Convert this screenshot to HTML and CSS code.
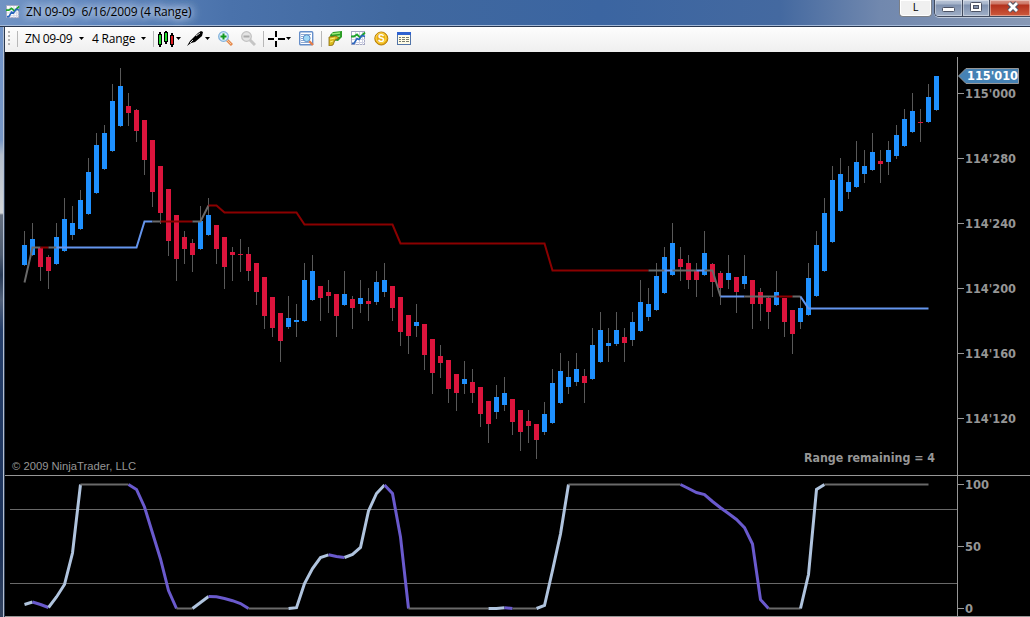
FILE: index.html
```html
<!DOCTYPE html>
<html lang="en">
<head>
    <meta charset="UTF-8">
    <meta name="viewport" content="width=device-width, initial-scale=1.0">
    <title>ZN 09-09 6/16/2009 (4 Range)</title>
    <link rel="stylesheet" href="styles.css">
</head>
<body>
    <svg class="defs" width="0" height="0">
        <symbol id="chartIcon" viewBox="0 0 15 15">
            <rect x=".5" y=".5" width="13" height="13" fill="#fff" stroke="#a6a9c4"/>
            <path d="M4.5 1v13M8.5 1v13M11.5 1v13M1 4.5h13M1 8.5h13M1 11.5h13" stroke="#cfd1e3"/>
            <path d="M0 5.5h3l3-2 3 3 5-5" fill="none" stroke="#20a52c" stroke-width="1.8"/>
            <path d="M1 12.5h2l3-5 2 1 3-4 3 1" fill="none" stroke="#2865bd" stroke-width="1.6"/>
        </symbol>
        <symbol id="arrow" viewBox="0 0 5 3">
            <path d="M0 0h5L2.5 3z" fill="#000"/>
        </symbol>
    </svg>

    <div class="window">
        <div class="titlebar">
            <svg class="title-icon" width="14" height="14"><use href="#chartIcon"/></svg>
            <span class="title">ZN 09-09&nbsp; 6/16/2009 (4 Range)</span>
            <div class="link-button">L</div>
            <div class="window-buttons">
                <div class="win-button minimize"><svg width="13" height="6"><rect x=".5" y=".5" width="12" height="4" rx="1" fill="#fff" stroke="#4c5264"/></svg></div>
                <div class="win-button maximize"><svg width="12" height="11"><rect x=".5" y=".5" width="11" height="9" rx="1" fill="#fff" stroke="#4c5264"/><rect x="3.5" y="3.5" width="5" height="3" fill="#8593ac" stroke="#4c5264"/></svg></div>
                <div class="win-button close"><svg width="14" height="12" viewBox="0 0 14 12"><path d="M3 2l8 8M11 2l-8 8" stroke="#555766" stroke-width="5"/><path d="M3 2l8 8M11 2l-8 8" stroke="#fff" stroke-width="2.8"/></svg></div>
            </div>
        </div>

        <div class="toolbar">
            <div class="grip"></div>
            <div class="separator"></div>
            <span class="label instrument">ZN 09-09</span>
            <svg class="arrow after-instrument"><use href="#arrow"/></svg>
            <span class="label period">4 Range</span>
            <svg class="arrow after-period"><use href="#arrow"/></svg>
            <div class="separator"></div>
            <svg class="icon candles" width="18" height="16" viewBox="0 0 18 16">
                <path d="M3 1v15M9 0v13M15 2v14" stroke="#000" stroke-width="2"/>
                <rect x="1.5" y="3.5" width="3" height="10" fill="#1fdc2c" stroke="#000"/>
                <rect x="7.5" y="1.5" width="3" height="9" fill="#1fdc2c" stroke="#000"/>
                <rect x="13.5" y="4.5" width="3" height="9" fill="#e01c20" stroke="#000"/>
            </svg>
            <svg class="arrow"><use href="#arrow"/></svg>
            <svg class="icon pen" width="17" height="16" viewBox="0 0 17 16">
                <path d="M0 15l3-5 8-8 3-2 2 1-1 4-7 6-4 1z" fill="#000"/>
                <path d="M3 12l3-3M9 5l4-3" stroke="#d8d8d8"/>
            </svg>
            <svg class="arrow"><use href="#arrow"/></svg>
            <svg class="icon" width="15" height="15" viewBox="0 0 15 15">
                <path d="M9 9l5 5" stroke="#e58a4e" stroke-width="3"/>
                <path d="M9 9l4 4" stroke="#f7c99c"/>
                <circle cx="5.5" cy="5.5" r="4.8" fill="#dceffb" stroke="#83b3dc" stroke-width="1.3"/>
                <path d="M5.5 2.5v6M2.5 5.5h6" stroke="#12981b" stroke-width="2"/>
            </svg>
            <svg class="icon" width="15" height="15" viewBox="0 0 15 15">
                <path d="M9 9l5 5" stroke="#c5c5c5" stroke-width="3"/>
                <circle cx="5.5" cy="5.5" r="4.8" fill="#e4e4e4" stroke="#c2c2c2" stroke-width="1.3"/>
                <path d="M2.5 5.5h6" stroke="#aaa" stroke-width="2"/>
            </svg>
            <div class="separator"></div>
            <svg class="icon crosshair" width="17" height="16" viewBox="0 0 17 16" shape-rendering="crispEdges">
                <path d="M8 0v6M8 10v6M0 8h6M10 8h7" stroke="#000" stroke-width="2"/>
            </svg>
            <svg class="arrow"><use href="#arrow"/></svg>
            <svg class="icon" width="15" height="15" viewBox="0 0 15 15">
                <rect x=".7" y=".7" width="13" height="13" rx="1" fill="#fff" stroke="#668fca" stroke-width="1.4"/>
                <path d="M2 3.5h10M2 5.5h3M2 7.5h2M2 9.5h3M2 11.5h8" stroke="#8fa9d2"/>
                <path d="M10 10l4 4" stroke="#e27c4a" stroke-width="2.4"/>
                <circle cx="7.7" cy="7.2" r="3.4" fill="#9fd8f6" stroke="#5b8cc4"/>
            </svg>
            <div class="separator"></div>
            <svg class="icon money" width="15" height="15" viewBox="0 0 15 15">
                <path d="M2 4l3-3 9-1v6l-4 4-7-1z" fill="#2b9c25"/>
                <path d="M4 3l8-1M6 6l6-1" stroke="#9bea75" stroke-width="1.4"/>
                <path d="M1 6l7-1 3 2-4 2-2 5-4 1z" fill="#d9b91e" stroke="#866710" stroke-width=".8"/>
                <path d="M2 8l5-1M2 11l3-1" stroke="#fff17b"/>
            </svg>
            <svg class="icon" width="15" height="15"><use href="#chartIcon"/></svg>
            <svg class="icon" width="15" height="15" viewBox="0 0 15 15">
                <circle cx="7.3" cy="7.5" r="6.5" fill="#e9ae12" stroke="#b57c08"/>
                <circle cx="7" cy="7" r="5" fill="none" stroke="#ffda52"/>
                <text class="dollar" x="7.3" y="11">S</text>
            </svg>
            <svg class="icon" width="15" height="15" viewBox="0 0 15 15">
                <rect x=".5" y="1.5" width="13" height="12" fill="#fffbe6" stroke="#5274a8"/>
                <path d="M0 2.5h14" stroke="#2f62d0" stroke-width="3"/>
                <path d="M2 6.5h2M5 6.5h3M9 6.5h3M2 8.5h2M5 8.5h3M9 8.5h3M2 10.5h2M5 10.5h3M9 10.5h3" stroke="#777c70"/>
            </svg>
        </div>

        <svg class="chart" id="chart" width="1025" height="565" viewBox="5 52 1025 565">
            <g id="bars" shape-rendering="crispEdges"></g>
            <g id="average"></g>

            <g class="grid" shape-rendering="crispEdges">
                <path d="M10 509.5H957M10 583.5H957"/>
            </g>
            <g id="oscillator"></g>
            <g class="axis" shape-rendering="crispEdges">
                <path d="M957.5 57V616M5 475.5H1030M5 616.5H1030"/>
            </g>
            <g id="ticks"></g>

            <path class="price-tag" d="M958.5 76L966 68.5H1018.5V83.5H966z"/>
            <text class="price" x="967" y="80" textLength="51" lengthAdjust="spacingAndGlyphs">115'010</text>
            <text class="remaining" x="804" y="462" textLength="131" lengthAdjust="spacingAndGlyphs">Range remaining = 4</text>
            <text class="copyright" x="12" y="470" textLength="124" lengthAdjust="spacingAndGlyphs">© 2009 NinjaTrader, LLC</text>
        </svg>
    </div>

    <script>
        const SVG_NS = 'http://www.w3.org/2000/svg';
        const FIRST_X = 24;
        const BAR_STEP = 8;

        // Each bar: direction, high, body top, body bottom, low
        const bars = [
            ['u',231,245,265,266], ['u',223,239,255,256], ['d',248,248,267,281], ['d',255,257,271,289],
            ['u',223,237,264,265], ['u',198,219,251,252], ['u',206,223,235,240], ['u',190,200,229,230],
            ['u',158,172,214,215], ['u',133,145,193,194], ['u',125,133,169,170], ['u',84,101,151,152],
            ['u',68,86,126,127], ['d',93,106,113,126], ['d',109,110,131,142], ['d',120,120,160,175],
            ['d',140,140,192,207], ['d',166,166,213,224], ['d',189,189,241,256], ['d',215,215,259,281],
            ['d',231,237,249,264], ['d',239,243,255,272], ['u',206,221,249,250], ['u',198,215,235,236],
            ['d',225,225,249,264], ['d',237,237,267,289], ['d',247,252,255,281], ['d',239,254,255,272],
            ['d',247,254,271,281], ['d',263,263,292,305], ['d',277,277,316,329], ['d',297,297,328,337],
            ['d',313,313,341,362], ['u',296,318,327,329], ['u',304,320,322,337], ['u',263,280,321,322],
            ['u',255,271,300,301], ['d',286,286,298,321], ['d',280,292,296,313], ['d',294,294,316,337],
            ['u',271,294,305,306], ['d',296,299,308,329], ['u',280,298,304,313], ['d',288,301,304,321],
            ['u',271,282,302,305], ['u',263,280,292,297], ['d',286,286,308,321], ['d',297,297,332,346],
            ['d',315,315,336,354], ['u',304,322,326,337], ['d',324,324,355,370], ['d',339,339,373,394],
            ['d',345,356,363,378], ['d',360,360,389,403], ['d',374,374,393,411], ['u',361,379,384,394],
            ['d',369,382,393,403], ['d',387,387,414,427], ['d',401,401,424,443], ['u',385,397,412,419],
            ['u',377,393,405,411], ['d',399,399,422,435], ['d',410,410,432,451], ['d',410,421,426,443],
            ['d',424,424,440,459], ['u',402,414,432,435], ['u',369,383,423,424], ['u',353,371,403,404],
            ['u',361,377,387,394], ['u',353,369,382,386], ['d',369,376,383,403], ['u',328,345,379,380],
            ['u',312,330,362,363], ['u',328,343,346,362], ['u',312,330,344,346], ['d',328,337,343,362],
            ['u',312,322,340,346], ['u',280,302,331,332], ['u',288,304,317,321], ['u',263,276,310,311],
            ['u',247,257,293,294], ['u',223,243,275,276], ['d',247,259,267,281], ['d',255,263,280,289],
            ['d',263,271,280,297], ['u',231,253,275,276], ['d',263,264,282,297], ['d',271,273,288,305],
            ['u',255,273,280,289], ['d',277,277,292,313], ['u',255,276,284,289], ['d',280,280,304,329],
            ['d',288,292,304,321], ['d',297,298,312,329], ['u',271,292,305,306], ['d',298,298,322,337],
            ['d',310,310,334,354], ['u',296,308,322,329], ['u',263,278,315,316], ['u',231,245,296,297],
            ['u',198,213,271,272], ['u',166,180,242,243], ['u',158,174,211,212], ['u',166,182,192,199],
            ['u',141,162,187,188], ['u',150,166,174,183], ['u',133,152,170,171], ['d',150,161,164,183],
            ['u',141,150,162,175], ['u',125,135,156,159], ['u',109,119,146,147], ['u',93,111,132,133],
            ['d',109,122,123,142], ['u',84,97,122,123], ['u',76,76,110,111]
        ];

        // Line runs: class name, then [bar index, y] points
        const average = [
            ['flat', [0,282.5], [1,247.5], [2,247.5]],
            ['down', [2,247.5], [3,247.5]],
            ['flat', [3,247.5], [4,247.5]],
            ['up', [4,247.5], [14,247.5], [15,221.5], [16,221.5]],
            ['flat', [16,221.5], [17,221.5]],
            ['down', [17,221.5], [21,221.5]],
            ['flat', [21,221.5], [22,221.5], [23,205.5]],
            ['down', [23,205.5], [24,205.5], [25,212.5], [34,212.5], [35,224.5], [46,224.5], [47,243.5], [65,243.5], [66,270.5], [78,270.5]],
            ['flat', [78,270.5], [80,270.5]],
            ['up', [80,270.5], [81,270.5]],
            ['flat', [81,270.5], [84,270.5]],
            ['up', [84,270.5], [85,270.5]],
            ['flat', [85,270.5], [86,270.5], [87,296.5]],
            ['up', [87,296.5], [90,296.5]],
            ['flat', [90,296.5], [94,296.5]],
            ['down', [94,296.5], [96,296.5]],
            ['flat', [96,296.5], [97,296.5]],
            ['up', [97,296.5], [98,308.5], [113,308.5]]
        ];

        const oscillator = [
            ['rising', [0,604.5], [1,602]],
            ['falling', [1,602], [2,604.5], [3,607.5]],
            ['rising', [3,607.5], [4,597], [5,584.5], [6,553], [7,484.5]],
            ['flat', [7,484.5], [13,484.5]],
            ['falling', [13,484.5], [14,489.5], [15,507], [16,533], [17,559], [18,590.5], [19,608.5]],
            ['flat', [19,608.5], [21,608.5]],
            ['rising', [21,608.5], [22,602.5], [23,596.5]],
            ['falling', [23,596.5], [24,596.8], [25,598.5], [26,600.7], [27,603.5], [28,608.5]],
            ['flat', [28,608.5], [33,608.5]],
            ['rising', [33,608.5], [34,607.7], [35,583.5], [36,568.5], [37,557.5], [38,554.8]],
            ['falling', [38,554.8], [39,556.5], [40,557.5]],
            ['rising', [40,557.5], [41,554.5], [42,547.5], [43,511], [44,493.5], [45,485]],
            ['falling', [45,485], [46,493.5], [47,537], [48,608.5]],
            ['flat', [48,608.5], [58,608.5]],
            ['rising', [58,608.5], [59,608.5], [60,607.7]],
            ['falling', [60,607.7], [61,608.5]],
            ['flat', [61,608.5], [64,608.5]],
            ['rising', [64,608.5], [65,605.5], [66,570.5], [67,534], [68,484.5]],
            ['flat', [68,484.5], [82,484.5]],
            ['falling', [82,484.5], [83,488.5], [84,492.5], [85,494.5], [86,501.5], [87,507.7], [88,513.5], [89,519.5], [90,527.7], [91,544], [92,599.7], [93,608.5]],
            ['flat', [93,608.5], [97,608.5]],
            ['rising', [97,608.5], [98,574.5], [99,489.5], [100,484.5]],
            ['flat', [100,484.5], [113,484.5]]
        ];

        const ticks = [
            ["115'000", 93, 51], ["114'280", 158, 51], ["114'240", 223, 51],
            ["114'200", 288, 51], ["114'160", 353, 51], ["114'120", 418, 51],
            ['100', 484, 24], ['50', 546, 16], ['0', 608, 8]
        ];

        function add(parent, tag, attrs) {
            const el = document.createElementNS(SVG_NS, tag);
            for (const key in attrs) {
                el.setAttribute(key, attrs[key]);
            }
            parent.appendChild(el);
            return el;
        }

        function drawBars() {
            const group = document.getElementById('bars');
            bars.forEach(([dir, high, top, bottom, low], i) => {
                const x = FIRST_X + i * BAR_STEP;
                add(group, 'rect', { class: 'wick', x: x, y: high, width: 1, height: low - high });
                add(group, 'rect', { class: 'body-' + dir, x: x - 2, y: top, width: 5, height: bottom - top });
            });
        }

        function drawLine(id, runs) {
            const group = document.getElementById(id);
            runs.forEach(([name, ...points]) => {
                const coords = points.map(([i, y]) => (FIRST_X + 0.5 + i * BAR_STEP) + ',' + y);
                add(group, 'polyline', { class: 'line ' + name, points: coords.join(' ') });
            });
        }

        function drawTicks() {
            const group = document.getElementById('ticks');
            ticks.forEach(([text, y, width]) => {
                add(group, 'rect', { class: 'tick', x: 958, y: y, width: 6, height: 1 });
                const label = add(group, 'text', { class: 'tick-label', x: 965, y: y + 5, textLength: width, lengthAdjust: 'spacingAndGlyphs' });
                label.textContent = text;
            });
        }

        drawBars();
        drawLine('average', average);
        drawLine('oscillator', oscillator);
        drawTicks();
    </script>
</body>
</html>
```
FILE: styles.css
```css
* {
    margin: 0;
    padding: 0;
    box-sizing: border-box;
}

body {
    font-family: "Open Sans", "Noto Sans", sans-serif;
    background: #000;
    overflow: hidden;
}

.defs {
    display: block;
}

/* The 5px on the left is the glass frame */
.window {
    width: 1030px;
    height: 617px;
    display: flex;
    flex-direction: column;
    padding-left: 5px;
    background:
        linear-gradient(90deg, transparent 3px, #b4c0d2 3px, #b4c0d2 4px, #2c3a50 4px, #2c3a50 5px, transparent 5px),
        linear-gradient(#6f93c9 0, #7797c6 140px, #b5bfcc 155px, #d4d6d8 213px, #667080 215px, #4f5c70 255px, #283a55 275px, #52617a 300px, #263f6a 330px, #1d3258 550px, #34445f 617px);
}

.titlebar {
    height: 27px;
    flex: none;
    display: flex;
    align-items: flex-start;
    margin-left: -5px;
    padding-left: 6px;
    background: linear-gradient(90deg, #7193c3 0, #6188bf 80px, #4a72ab 230px, #40689f 400px, #3b65a1 600px, #4469a0 780px, #7188ae 880px, #8798b5 1030px);
    border-bottom: 1px solid #28364e;
    box-shadow: inset 0 -1px #a5bad8;
}

.title-icon {
    margin-top: 5px;
}

.title {
    margin-left: 6px;
    width: 690px;
    margin-right: auto;
    font-size: 12px;
    line-height: 24px;
    letter-spacing: -0.1px;
    white-space: nowrap;
    color: #000;
    text-shadow: 0 0 8px #dce6f4, 0 0 8px #dce6f4, 0 0 12px #c3d3ea;
}

.link-button {
    width: 33px;
    height: 17px;
    margin-right: 2px;
    border: 1px solid #7c8087;
    border-top: none;
    border-radius: 0 0 4px 4px;
    box-shadow: inset 0 0 0 1px #fff;
    background: #f0f0f0;
    font-size: 11px;
    line-height: 14px;
    text-align: center;
}

.window-buttons {
    display: flex;
    height: 17px;
    border: 1px solid #414a5e;
    border-top: none;
    border-right: none;
    border-radius: 0 0 0 5px;
    box-shadow: 0 1px #bcc8da;
    overflow: hidden;
}

.win-button {
    height: 16px;
    display: flex;
    justify-content: center;
    border-right: 1px solid #414a5e;
    background: linear-gradient(#b9c5d8 0, #a6b4ca 4px, #7f91af 5px, #a0afc7 16px);
    box-shadow: inset 0 0 0 1px rgba(255, 255, 255, 0.4);
}

.minimize {
    width: 28px;
    padding-top: 7px;
}

.maximize {
    width: 27px;
    padding-top: 2px;
}

.close {
    width: 40px;
    padding-left: 6px;
    padding-top: 1px;
    border-right: none;
    background: linear-gradient(#d9988c 0, #cc7564 4px, #b3311d 5px, #cd5a3d 16px);
}

.toolbar {
    height: 25px;
    flex: none;
    display: flex;
    align-items: center;
    padding-bottom: 2px;
    background: linear-gradient(#fdfdfd, #efefef);
}

.toolbar > * {
    flex: none;
}

.grip {
    width: 2px;
    height: 15px;
    margin-left: 3px;
    background: repeating-linear-gradient(#b5b5b5 0, #b5b5b5 2px, transparent 2px, transparent 4px);
}

.separator {
    width: 1px;
    height: 16px;
    margin-left: 7px;
    background: #b8b8b8;
}

.label {
    font-size: 12px;
    line-height: 20px;
    margin-left: 7px;
    white-space: nowrap;
}

.instrument {
    width: 48px;
    letter-spacing: -0.4px;
}

.period {
    width: 44px;
    margin-left: 8px;
    letter-spacing: -0.2px;
}

.arrow {
    width: 5px;
    height: 3px;
    margin-left: 1px;
}

.after-instrument {
    margin-left: 6px;
}

.after-period {
    margin-left: 5px;
}

.icon {
    margin-left: 8px;
}

.candles {
    margin-left: 3px;
}

.pen,
.money {
    margin-left: 6px;
}

.crosshair {
    margin-left: 4px;
}

.dollar {
    font: bold 10px "Liberation Sans", Arial, sans-serif;
    fill: #fff;
    text-anchor: middle;
}

.chart {
    display: block;
    flex: none;
    background: #000;
}

.wick {
    fill: #595959;
}

.body-u {
    fill: #1e90ff;
}

.body-d {
    fill: #dc143c;
}

.line {
    fill: none;
    stroke-width: 2;
}

.up {
    stroke: #6495ed;
}

.down {
    stroke: #8b0000;
}

.flat {
    stroke: #696969;
}

.rising {
    stroke: #b0c4de;
    stroke-width: 3;
}

.falling {
    stroke: #6a5acd;
    stroke-width: 3;
}

.grid path {
    stroke: #696969;
}

.axis path {
    stroke: #969696;
}

.tick {
    fill: #969696;
}

.tick-label,
.price,
.remaining {
    font-family: "DejaVu Sans Condensed", "DejaVu Sans", sans-serif;
    font-stretch: condensed;
    font-weight: bold;
    font-size: 13px;
    fill: #969696;
}

.price-tag {
    fill: #4682b4;
    stroke: #969696;
}

.price {
    fill: #fff;
}

.copyright {
    font-family: "Liberation Sans", Arial, sans-serif;
    font-size: 11px;
    fill: #969696;
}
```
